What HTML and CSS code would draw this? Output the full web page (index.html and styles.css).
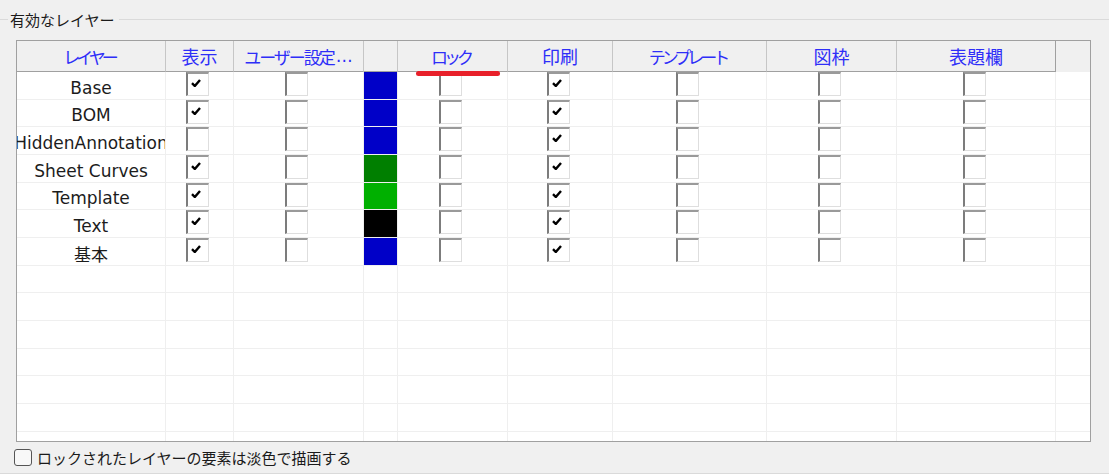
FILE: index.html
```html
<!DOCTYPE html>
<html lang="ja">
<head>
    <meta charset="UTF-8">
    <title>有効なレイヤー</title>
    <link rel="stylesheet" href="styles.css">
</head>
<body>
    <div class="group">
        <div class="group-head"><span>有効なレイヤー</span></div>

        <div class="layers">
            <div class="row head">
                <div class="cell c-name"><span class="kana">レイヤー</span></div>
                <div class="cell c-show">表示</div>
                <div class="cell c-user"><span class="mixed">ユーザー設定</span><span class="ell">…</span></div>
                <div class="cell c-color"></div>
                <div class="cell c-lock"><span class="kana">ロック</span></div>
                <div class="cell c-print">印刷</div>
                <div class="cell c-tmpl"><span class="kana">テンプレート</span></div>
                <div class="cell c-frame">図枠</div>
                <div class="cell c-title">表題欄</div>
                <div class="cell c-fill"></div>
            </div>

            <div class="row">
                <div class="cell c-name"><span>Base</span></div>
                <div class="cell c-show"><span class="cb"><svg viewBox="0 0 10 8"><path d="M1 4.2 L3.8 7 L9 1"/></svg></span></div>
                <div class="cell c-user"><span class="cb"></span></div>
                <div class="cell c-color blue"></div>
                <div class="cell c-lock"><span class="cb"></span></div>
                <div class="cell c-print"><span class="cb"><svg viewBox="0 0 10 8"><path d="M1 4.2 L3.8 7 L9 1"/></svg></span></div>
                <div class="cell c-tmpl"><span class="cb"></span></div>
                <div class="cell c-frame"><span class="cb"></span></div>
                <div class="cell c-title"><span class="cb"></span></div>
                <div class="cell c-fill"></div>
            </div>
            <div class="row">
                <div class="cell c-name"><span>BOM</span></div>
                <div class="cell c-show"><span class="cb"><svg viewBox="0 0 10 8"><path d="M1 4.2 L3.8 7 L9 1"/></svg></span></div>
                <div class="cell c-user"><span class="cb"></span></div>
                <div class="cell c-color blue"></div>
                <div class="cell c-lock"><span class="cb"></span></div>
                <div class="cell c-print"><span class="cb"><svg viewBox="0 0 10 8"><path d="M1 4.2 L3.8 7 L9 1"/></svg></span></div>
                <div class="cell c-tmpl"><span class="cb"></span></div>
                <div class="cell c-frame"><span class="cb"></span></div>
                <div class="cell c-title"><span class="cb"></span></div>
                <div class="cell c-fill"></div>
            </div>
            <div class="row">
                <div class="cell c-name"><span>HiddenAnnotation</span></div>
                <div class="cell c-show"><span class="cb"></span></div>
                <div class="cell c-user"><span class="cb"></span></div>
                <div class="cell c-color blue"></div>
                <div class="cell c-lock"><span class="cb"></span></div>
                <div class="cell c-print"><span class="cb"><svg viewBox="0 0 10 8"><path d="M1 4.2 L3.8 7 L9 1"/></svg></span></div>
                <div class="cell c-tmpl"><span class="cb"></span></div>
                <div class="cell c-frame"><span class="cb"></span></div>
                <div class="cell c-title"><span class="cb"></span></div>
                <div class="cell c-fill"></div>
            </div>
            <div class="row">
                <div class="cell c-name"><span>Sheet Curves</span></div>
                <div class="cell c-show"><span class="cb"><svg viewBox="0 0 10 8"><path d="M1 4.2 L3.8 7 L9 1"/></svg></span></div>
                <div class="cell c-user"><span class="cb"></span></div>
                <div class="cell c-color green"></div>
                <div class="cell c-lock"><span class="cb"></span></div>
                <div class="cell c-print"><span class="cb"><svg viewBox="0 0 10 8"><path d="M1 4.2 L3.8 7 L9 1"/></svg></span></div>
                <div class="cell c-tmpl"><span class="cb"></span></div>
                <div class="cell c-frame"><span class="cb"></span></div>
                <div class="cell c-title"><span class="cb"></span></div>
                <div class="cell c-fill"></div>
            </div>
            <div class="row">
                <div class="cell c-name"><span>Template</span></div>
                <div class="cell c-show"><span class="cb"><svg viewBox="0 0 10 8"><path d="M1 4.2 L3.8 7 L9 1"/></svg></span></div>
                <div class="cell c-user"><span class="cb"></span></div>
                <div class="cell c-color lime"></div>
                <div class="cell c-lock"><span class="cb"></span></div>
                <div class="cell c-print"><span class="cb"><svg viewBox="0 0 10 8"><path d="M1 4.2 L3.8 7 L9 1"/></svg></span></div>
                <div class="cell c-tmpl"><span class="cb"></span></div>
                <div class="cell c-frame"><span class="cb"></span></div>
                <div class="cell c-title"><span class="cb"></span></div>
                <div class="cell c-fill"></div>
            </div>
            <div class="row">
                <div class="cell c-name"><span>Text</span></div>
                <div class="cell c-show"><span class="cb"><svg viewBox="0 0 10 8"><path d="M1 4.2 L3.8 7 L9 1"/></svg></span></div>
                <div class="cell c-user"><span class="cb"></span></div>
                <div class="cell c-color black"></div>
                <div class="cell c-lock"><span class="cb"></span></div>
                <div class="cell c-print"><span class="cb"><svg viewBox="0 0 10 8"><path d="M1 4.2 L3.8 7 L9 1"/></svg></span></div>
                <div class="cell c-tmpl"><span class="cb"></span></div>
                <div class="cell c-frame"><span class="cb"></span></div>
                <div class="cell c-title"><span class="cb"></span></div>
                <div class="cell c-fill"></div>
            </div>
            <div class="row">
                <div class="cell c-name"><span>基本</span></div>
                <div class="cell c-show"><span class="cb"><svg viewBox="0 0 10 8"><path d="M1 4.2 L3.8 7 L9 1"/></svg></span></div>
                <div class="cell c-user"><span class="cb"></span></div>
                <div class="cell c-color blue"></div>
                <div class="cell c-lock"><span class="cb"></span></div>
                <div class="cell c-print"><span class="cb"><svg viewBox="0 0 10 8"><path d="M1 4.2 L3.8 7 L9 1"/></svg></span></div>
                <div class="cell c-tmpl"><span class="cb"></span></div>
                <div class="cell c-frame"><span class="cb"></span></div>
                <div class="cell c-title"><span class="cb"></span></div>
                <div class="cell c-fill"></div>
            </div>

            <!-- empty rows -->
            <div class="row"><div class="cell c-name"></div><div class="cell c-show"></div><div class="cell c-user"></div><div class="cell c-color"></div><div class="cell c-lock"></div><div class="cell c-print"></div><div class="cell c-tmpl"></div><div class="cell c-frame"></div><div class="cell c-title"></div><div class="cell c-fill"></div></div>
            <div class="row"><div class="cell c-name"></div><div class="cell c-show"></div><div class="cell c-user"></div><div class="cell c-color"></div><div class="cell c-lock"></div><div class="cell c-print"></div><div class="cell c-tmpl"></div><div class="cell c-frame"></div><div class="cell c-title"></div><div class="cell c-fill"></div></div>
            <div class="row"><div class="cell c-name"></div><div class="cell c-show"></div><div class="cell c-user"></div><div class="cell c-color"></div><div class="cell c-lock"></div><div class="cell c-print"></div><div class="cell c-tmpl"></div><div class="cell c-frame"></div><div class="cell c-title"></div><div class="cell c-fill"></div></div>
            <div class="row"><div class="cell c-name"></div><div class="cell c-show"></div><div class="cell c-user"></div><div class="cell c-color"></div><div class="cell c-lock"></div><div class="cell c-print"></div><div class="cell c-tmpl"></div><div class="cell c-frame"></div><div class="cell c-title"></div><div class="cell c-fill"></div></div>
            <div class="row"><div class="cell c-name"></div><div class="cell c-show"></div><div class="cell c-user"></div><div class="cell c-color"></div><div class="cell c-lock"></div><div class="cell c-print"></div><div class="cell c-tmpl"></div><div class="cell c-frame"></div><div class="cell c-title"></div><div class="cell c-fill"></div></div>
            <div class="row"><div class="cell c-name"></div><div class="cell c-show"></div><div class="cell c-user"></div><div class="cell c-color"></div><div class="cell c-lock"></div><div class="cell c-print"></div><div class="cell c-tmpl"></div><div class="cell c-frame"></div><div class="cell c-title"></div><div class="cell c-fill"></div></div>
            <div class="row"><div class="cell c-name"></div><div class="cell c-show"></div><div class="cell c-user"></div><div class="cell c-color"></div><div class="cell c-lock"></div><div class="cell c-print"></div><div class="cell c-tmpl"></div><div class="cell c-frame"></div><div class="cell c-title"></div><div class="cell c-fill"></div></div>

            <div class="marker"></div>
        </div>

        <label class="option">
            <span class="option-box"></span>
            <span>ロックされたレイヤーの要素は淡色で描画する</span>
        </label>
    </div>
</body>
</html>
```

FILE: styles.css
```css
body {
    margin: 0;
    width: 1109px;
    height: 474px;
    overflow: hidden;
    background-color: #f0f0f0;
    font-family: "DejaVu Sans", "Noto Sans CJK JP", sans-serif;
    color: #1a1a1a;
}
.group-head {
    display: flex;
    align-items: center;
    height: 38px;
    font-family: "Noto Sans CJK JP", sans-serif;
    font-size: 15px;
}
.group-head::before {
    content: "";
    width: 8px;
    border-top: 1px solid #dadada;
}
.group-head span {
    padding: 0 4px 0 2px;
}
.group-head::after {
    content: "";
    flex: 1;
    border-top: 1px solid #dadada;
}
.layers {
    position: relative;
    margin: 2px 0 0 16px;
    width: 1075px;
    height: 402px;
    box-sizing: border-box;
    border: 1px solid #a0a0a0;
    background-color: white;
    overflow: hidden;
}
.row {
    display: flex;
    height: 27.67px;
    box-sizing: border-box;
    border-bottom: 1px solid #efefef;
    flex-shrink: 0;
}
.cell {
    display: flex;
    justify-content: center;
    align-items: flex-start;
    box-sizing: border-box;
    border-right: 1px solid #efefef;
    flex-shrink: 0;
    overflow: clip;
}
.c-name { width: 149px; align-items: center; padding-top: 5px; }
.c-show { width: 68px; }
.c-user { width: 130px; }
.c-color { width: 34px; }
.c-lock { width: 110px; }
.c-print { width: 105px; }
.c-tmpl { width: 154px; }
.c-frame { width: 130px; }
.c-title { width: 159px; }
.c-fill { width: 34px; border-right: none; }

.c-name span {
    flex-shrink: 0;
    font-size: 17px;
    white-space: nowrap;
    color: #1c1c1c;
}

.head {
    height: 31px;
    border-bottom: none;
    background-color: #f0f0f0;
}
.head .cell {
    align-items: center;
    padding-top: 0;
    border-right: 1px solid #c6c6c6;
    border-bottom: 1px solid #a0a0a0;
    font-family: "Noto Sans CJK JP", sans-serif;
    font-size: 18px;
    color: #2e2ef8;
    white-space: nowrap;
}
.head .cell span {
    font-size: 17px;
    color: #2e2ef8;
}
.head .kana {
    letter-spacing: -4px;
    padding-right: 4px;
}
.head .mixed {
    letter-spacing: -2px;
}
.head .ell {
    font-family: "DejaVu Sans", sans-serif;
    letter-spacing: 0;
    margin-left: 2px;
}
.head .c-title {
    border-right-color: #a0a0a0;
}
.head .c-fill {
    border: none;
}

.blue { background-color: #0000c8; }
.green { background-color: #007f00; }
.lime { background-color: #00b000; }
.black { background-color: #000000; }

.cb {
    display: block;
    width: 23px;
    height: 24px;
    margin-left: -4px;
    box-sizing: border-box;
    border-top: 2px solid #9a9a9a;
    border-left: 2px solid #7c7c7c;
    border-right: 1px solid #dedede;
    border-bottom: 1px solid #dedede;
    background-color: white;
}
.cb svg {
    display: block;
    width: 10px;
    height: 8px;
    margin: 5px 0 0 3px;
}
.cb path {
    fill: none;
    stroke: black;
    stroke-width: 2.4;
}

.marker {
    position: absolute;
    left: 399px;
    top: 30px;
    width: 84px;
    height: 5px;
    border-radius: 3px;
    background-color: #e8202a;
}

.option {
    display: flex;
    align-items: center;
    height: 31px;
    padding-left: 14px;
    border-bottom: 1px solid #dadada;
    font-family: "Noto Sans CJK JP", sans-serif;
    font-size: 15px;
    color: #1a1a1a;
}
.option-box {
    width: 18px;
    height: 17px;
    margin-right: 5px;
    box-sizing: border-box;
    border: 1px solid #555;
    border-radius: 3px;
    background-color: #f8f8f8;
}
```
